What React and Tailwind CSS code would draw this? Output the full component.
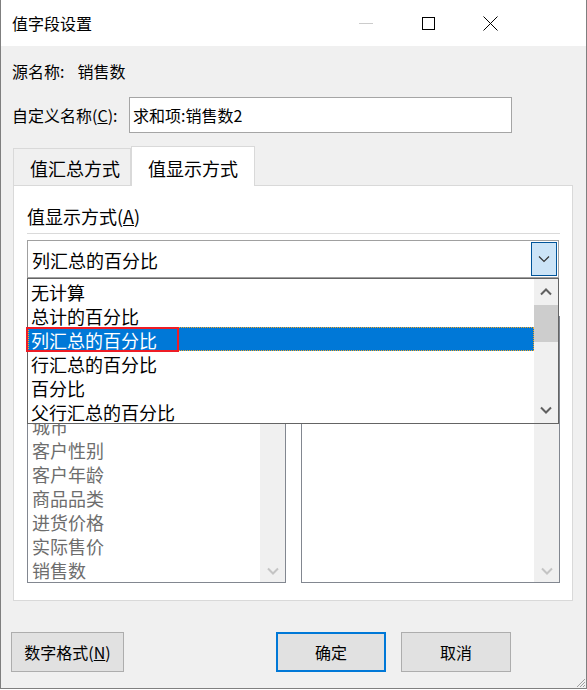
const ChevronDown = ({ className, stroke = "#606060", width = 2 }) => (
  <svg width="12" height="8" viewBox="0 0 12 8" className={className}>
    <path d="M1 1.5 L6 6.5 L11 1.5" fill="none" stroke={stroke} strokeWidth={width} />
  </svg>
);

const ChevronUp = ({ className }) => (
  <svg width="12" height="8" viewBox="0 0 12 8" className={className}>
    <path d="M1 6.5 L6 1.5 L11 6.5" fill="none" stroke="#606060" strokeWidth="2" />
  </svg>
);

// rows above "城市" sit under the open dropdown, so they are left empty
const FieldList = ({ items, skip = 0 }) => (
  <div className="w-[259px] h-[267px] bg-white border border-[#828790] flex">
    <div className="flex-1 flex flex-col" style={{ paddingTop: skip * 24 }}>
      {items.map((it) => (
        <div key={it} className="h-[24px] leading-[26px] pl-[4px] text-[#6d6d6d] whitespace-nowrap">
          {it}
        </div>
      ))}
    </div>
    <div className="w-[25px] bg-[#f0f0f0] flex flex-col justify-end items-center pb-[7px]">
      <ChevronDown stroke="#c4c4c4" />
    </div>
  </div>
);

const App = () => {
  const options = ["无计算", "总计的百分比", "列汇总的百分比", "行汇总的百分比", "百分比", "父行汇总的百分比"];
  const fields = ["城市", "客户性别", "客户年龄", "商品品类", "进货价格", "实际售价", "销售数"];

  return (
    <div className="w-[587px] h-[689px] bg-[#f0f0f0] border-l border-r border-b border-[#7f7f7f] flex flex-col relative font-['Noto_Sans_CJK_SC',sans-serif] text-black">
      {/* title bar */}
      <div className="h-[46px] bg-white flex items-center shrink-0">
        <div className="pl-[11px] text-[16px] leading-[24px]">值字段设置</div>
        <div className="ml-auto mr-[65px] flex h-full">
          <div className="w-[62px] flex items-center justify-center">
            <div className="w-[14px] h-px bg-[#cccccc]" />
          </div>
          <div className="w-[62px] flex items-center justify-center">
            <div className="w-[13px] h-[13px] border border-black" />
          </div>
          <div className="w-[62px] flex items-center justify-center">
            <svg width="15" height="15" viewBox="0 0 15 15">
              <path d="M0.5 0.5 L14.5 14.5 M14.5 0.5 L0.5 14.5" stroke="#000" strokeWidth="1" fill="none" />
            </svg>
          </div>
        </div>
      </div>

      {/* source name */}
      <div className="mt-[13px] h-[24px] flex items-center pl-[11px] text-[16px] leading-[24px]">
        <span>源名称:</span>
        <span className="ml-[13px]">销售数</span>
      </div>

      {/* custom name */}
      <div className="mt-[14px] h-[36px] flex items-center pl-[11px] text-[16px]">
        <span className="w-[117px] leading-[24px]">
          自定义名称(<span className="underline">C</span>):
        </span>
        <div className="w-[383px] h-[36px] bg-white border border-[#a5a5a5] flex items-center pl-[3px] leading-[24px]">
          求和项:销售数2
        </div>
      </div>

      {/* tabs */}
      <div className="mt-[15px] ml-[12px] h-[37px] flex items-end text-[18px]">
        <div className="w-[118px] h-[37px] border border-b-0 border-[#d9d9d9] bg-[#f0f0f0] pl-[16px] leading-[38px]">
          值汇总方式
        </div>
        <div className="w-[124px] h-[40px] -mb-px relative z-10 border border-b-0 border-[#d9d9d9] bg-white pl-[16px] leading-[43px]">
          值显示方式
        </div>
      </div>

      {/* tab panel */}
      <div className="ml-[12px] w-[560px] h-[416px] bg-white border border-[#d9d9d9] pl-[13px] text-[18px]">
        <div className="mt-[17px] h-[24px] leading-[26px]">
          值显示方式(<span className="underline">A</span>)
        </div>
        <div className="mt-[6px] w-[533px] h-px bg-[#dadada]" />

        {/* combobox */}
        <div className="relative mt-[6px] w-[532px] h-[38px] border border-[#a0a0a0] p-px flex">
          <div className="flex-1 pl-[3px] leading-[37px]">列汇总的百分比</div>
          <div className="w-[26px] h-[34px] border border-[#005499] bg-[#cce4f7] flex items-center justify-center">
            <ChevronDown stroke="#333" width={1.2} />
          </div>

          {/* open dropdown list */}
          <div className="absolute left-[-1px] top-[37px] z-20 w-[532px] h-[146px] bg-white border border-[#646464] flex">
            <div className="flex-1 flex flex-col">
              {options.map((o, i) =>
                i === 2 ? (
                  <div
                    key={o}
                    className="h-[24px] leading-[24px] pl-[2px] bg-[#0078d7] text-white border border-dotted border-[#f5a623]"
                  >
                    {o}
                  </div>
                ) : (
                  <div key={o} className="h-[24px] leading-[26px] pl-[3px]">
                    {o}
                  </div>
                )
              )}
            </div>
            <div className="w-[24px] bg-[#f0f0f0] flex flex-col items-center">
              <div className="h-[26px] flex items-center">
                <ChevronUp />
              </div>
              <div className="w-[24px] h-[37px] bg-[#cdcdcd]" />
              <div className="mt-auto h-[26px] flex items-center">
                <ChevronDown />
              </div>
            </div>
            <div className="absolute left-[-2px] top-[48px] w-[153px] h-[25px] border-2 border-[#ee1c25]" />
          </div>
        </div>

        {/* space for the labels hidden under the dropdown */}
        <div className="mt-[8px] h-[24px]" />

        {/* field lists */}
        <div className="mt-[6px] flex gap-[15px]">
          <FieldList items={fields} skip={4} />
          <FieldList items={[]} />
        </div>
      </div>

      {/* buttons */}
      <div className="mt-[31px] ml-[10px] flex text-[16px]">
        <button className="w-[113px] h-[40px] bg-[#e1e1e1] border border-[#adadad] leading-[26px]">
          数字格式(<span className="underline">N</span>)
        </button>
        <button className="ml-[152px] w-[110px] h-[40px] bg-[#e1e1e1] border-2 border-[#0078d7] leading-[26px]">
          确定
        </button>
        <button className="ml-[15px] w-[110px] h-[40px] bg-[#e1e1e1] border border-[#adadad] leading-[26px]">
          取消
        </button>
      </div>

      {/* resize grip */}
      <svg className="absolute right-0 bottom-0" width="12" height="12" viewBox="0 0 12 12">
        <path d="M11 3 L3 11 M11 6 L6 11 M11 9 L9 11" stroke="#a0a0a0" strokeWidth="1" fill="none" />
      </svg>
    </div>
  );
};

export default App;
